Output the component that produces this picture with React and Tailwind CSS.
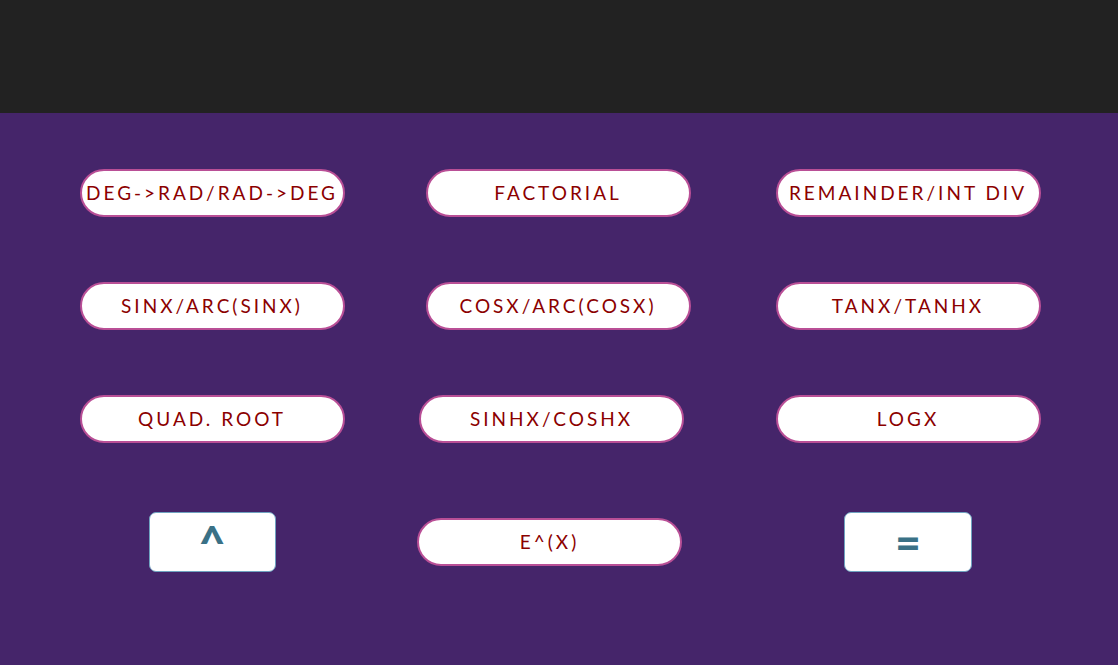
import React from "react";

const pill =
  "h-[48px] w-[265px] rounded-[24px] bg-white border-2 border-[#b94f96] text-[#8b0000] text-[19px] tracking-[3px] flex items-center justify-center whitespace-nowrap";

function Pill({ children, extra = "" }) {
  return <button className={`${pill} ${extra}`}>{children}</button>;
}

export default function App() {
  return (
    <div className="w-[1118px] h-[665px] flex flex-col" style={{ fontFamily: "Lato, 'Open Sans', sans-serif" }}>
      <div className="h-[113px] bg-[#222222]" />
      <div className="flex-1 bg-[#45256a] pt-[56px]">
        <div className="grid grid-cols-[346px_346px_354px] pl-[39px] gap-y-[65px]">
          <Pill extra="justify-self-center">DEG-&gt;RAD/RAD-&gt;DEG</Pill>
          <Pill extra="justify-self-center">FACTORIAL</Pill>
          <Pill extra="justify-self-center">REMAINDER/INT DIV</Pill>

          <Pill extra="justify-self-center">SINX/ARC(SINX)</Pill>
          <Pill extra="justify-self-center">COSX/ARC(COSX)</Pill>
          <Pill extra="justify-self-center">TANX/TANHX</Pill>

          <Pill extra="justify-self-center">QUAD. ROOT</Pill>
          <Pill extra="justify-self-start ml-[34px]">SINHX/COSHX</Pill>
          <Pill extra="justify-self-center">LOGX</Pill>
        </div>
        <div className="grid grid-cols-[346px_346px_354px] pl-[39px] mt-[69px] items-center">
          <button className="justify-self-center w-[127px] h-[60px] rounded-[7px] bg-white border border-[#6fa3c0] text-[#3a7186] text-[46px] font-black leading-none flex items-start justify-center pt-[7px]">
            ^
          </button>
          <Pill extra="justify-self-start ml-[32px] h-[48px]">E^(X)</Pill>
          <button className="justify-self-center w-[128px] h-[60px] rounded-[7px] bg-white border border-[#6fa3c0] text-[#3a7186] text-[44px] font-black leading-none flex items-center justify-center">
            =
          </button>
        </div>
      </div>
    </div>
  );
}
